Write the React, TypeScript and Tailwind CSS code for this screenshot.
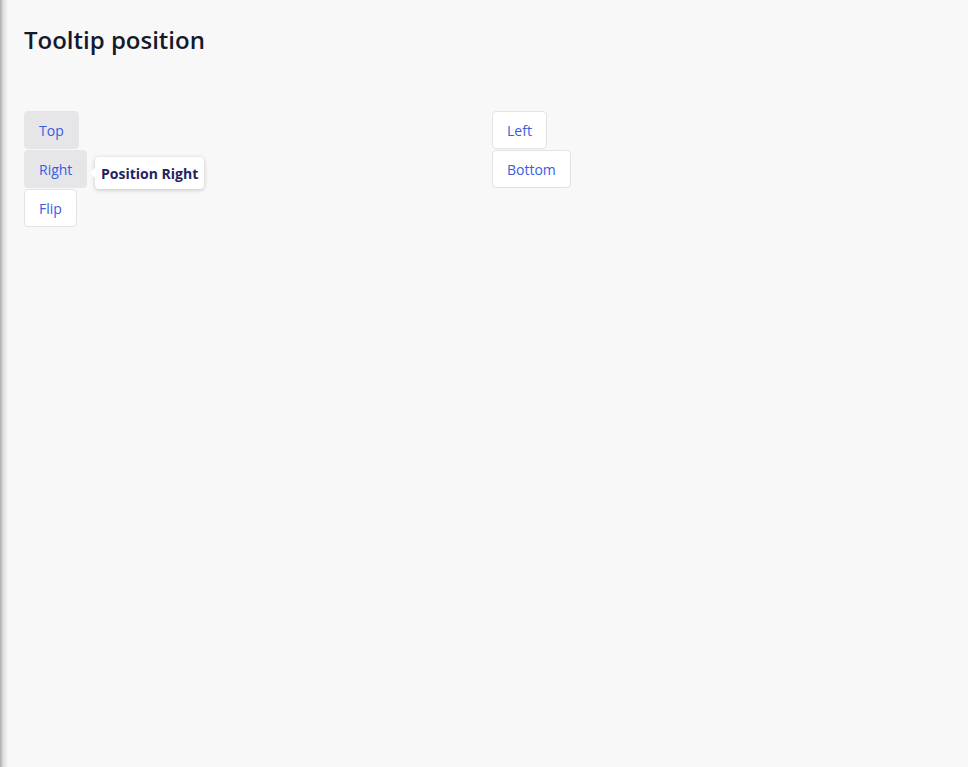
import React from 'react';

const font = { fontFamily: '"Open Sans", "Noto Sans", sans-serif' };

const Btn: React.FC<{ label: string; active?: boolean }> = ({ label, active }) => (
  <button
    className={
      active
        ? 'self-start px-[14px] pt-[9px] pb-[7px] text-sm leading-5 text-[#3b5ce0] bg-[#e6e6e8] border border-[#e6e6e8] rounded'
        : 'self-start px-[14px] pt-[9px] pb-[7px] text-sm leading-5 text-[#3b5ce0] bg-white border border-[#e3e3e6] rounded'
    }
  >
    {label}
  </button>
);

export default function App() {
  return (
    <div
      style={font}
      className="min-h-[767px] bg-[linear-gradient(to_right,#acacac,#dcdcdc_3px,#f8f8f8_8px)] px-6 pt-6"
    >
      <h1 className="text-2xl leading-8 font-semibold text-[#131a2c]">Tooltip position</h1>

      <div className="grid grid-cols-2 gap-4 mt-[55px]">
        <div className="flex flex-col gap-px">
          <Btn label="Top" active />
          <div className="relative self-start">
            <Btn label="Right" active />
            <div className="absolute left-[71px] top-[7px] bg-white rounded px-[6px] pt-[7px] pb-[5px] shadow-[0_1px_4px_rgba(0,0,0,0.22)]">
              <span className="absolute left-[-5px] top-1/2 -translate-y-1/2 w-0 h-0 border-y-[6px] border-y-transparent border-r-[6px] border-r-white" />
              <span className="block text-sm leading-5 font-bold text-[#23235e] whitespace-nowrap">Position Right</span>
            </div>
          </div>
          <Btn label="Flip" />
        </div>
        <div className="flex flex-col gap-px">
          <Btn label="Left" />
          <Btn label="Bottom" />
        </div>
      </div>
    </div>
  );
}
